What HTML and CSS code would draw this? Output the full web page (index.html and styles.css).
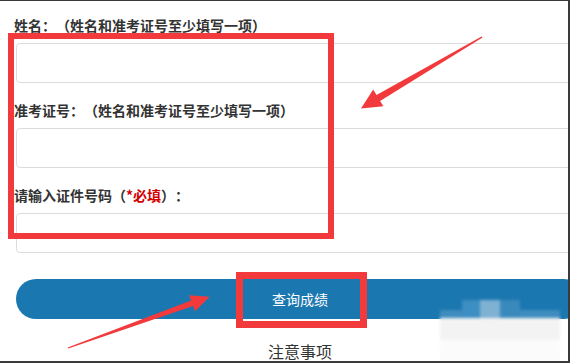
FILE: index.html
```html
<!doctype html>
<html>
<head>
  <meta charset="utf-8">
  <title>成绩查询</title>
  <link rel="stylesheet" href="styles.css">
</head>
<body>
  <div class="frame">
    <form class="query">
      <label class="field-label">姓名：（姓名和准考证号至少填写一项）</label>
      <input class="field" type="text">

      <label class="field-label">准考证号：（姓名和准考证号至少填写一项）</label>
      <input class="field" type="text">

      <label class="field-label">请输入证件号码（<span class="required">*必填</span>）：</label>
      <input class="field" type="text">

      <button class="submit" type="button">查询成绩</button>
      <p class="notice">注意事项</p>
    </form>

    <!-- screenshot markup: red boxes, arrows and the blurred watermark -->
    <svg class="marks" width="572" height="363" viewBox="0 0 572 363">
      <rect x="11" y="36" width="320" height="200" fill="none" stroke="#f23a3c" stroke-width="6"/>
      <rect x="239.5" y="275.5" width="124" height="49" fill="none" stroke="#f23a3c" stroke-width="7"/>
      <polygon fill="#f23a3c" points="482.5,37.6 380.1,100.9 383.4,106.2 361,108.5 373.2,89.6 376.5,94.9 481.6,36.4"/>
      <polygon fill="#f23a3c" points="68.3,348.5 193.1,306 195.2,311.2 209.5,296.8 189,295.2 191.1,300.4 67.7,347.5"/>
      <g class="blur">
        <rect x="440" y="310" width="120" height="8" fill="#3f8cbf"/>
        <rect x="462" y="300" width="18" height="18" fill="#3d8ec2"/>
        <rect x="480" y="300" width="20" height="18" fill="#7fb1d3"/>
        <rect x="500" y="300" width="20" height="18" fill="#3a89bd"/>
        <rect x="440" y="318" width="120" height="22" fill="#f3f3f3"/>
        <rect x="440" y="340" width="120" height="21" fill="#fbfbfb"/>
      </g>
    </svg>
  </div>
</body>
</html>
```

FILE: styles.css
```css
* {
  box-sizing: border-box;
  margin: 0;
  padding: 0;
}

body {
  font-family: "Noto Sans CJK SC", "Liberation Sans", sans-serif;
  color: #333;
  background: #fff;
  text-spacing-trim: space-all;
}

.frame {
  position: relative;
  width: 570px;
  height: 363px;
  overflow: hidden;
  border-top: 1px solid #3a3a3a;
  border-right: 2px solid #3a3a3a;
  border-bottom: 2px solid #3a3a3a;
}

.query {
  display: flex;
  flex-direction: column;
  width: 568px;
  margin-left: 16px;
  padding-top: 14px;
}

.field-label {
  display: block;
  margin-left: -2px;
  font-size: 14px;
  font-weight: 700;
  line-height: 20px;
  white-space: nowrap;
  margin-bottom: 8px;
}

.required { color: #d40000 }

.field {
  display: block;
  width: 100%;
  height: 40px;
  border: 1px solid #dcdcdc;
  border-radius: 4px;
  background: #fff;
  margin-bottom: 17px;
}

.submit {
  margin-top: 9px;
  height: 40px;
  width: 100%;
  border: none;
  border-radius: 20px;
  background: #1b77b0;
  color: #fff;
  font-family: inherit;
  font-size: 14px;
}

.notice {
  margin-top: 22px;
  text-align: center;
  font-size: 16px;
  line-height: 20px;
}

.marks {
  position: absolute;
  top: -1px;
  left: 0;
}

.blur { filter: blur(1.5px) }
```
